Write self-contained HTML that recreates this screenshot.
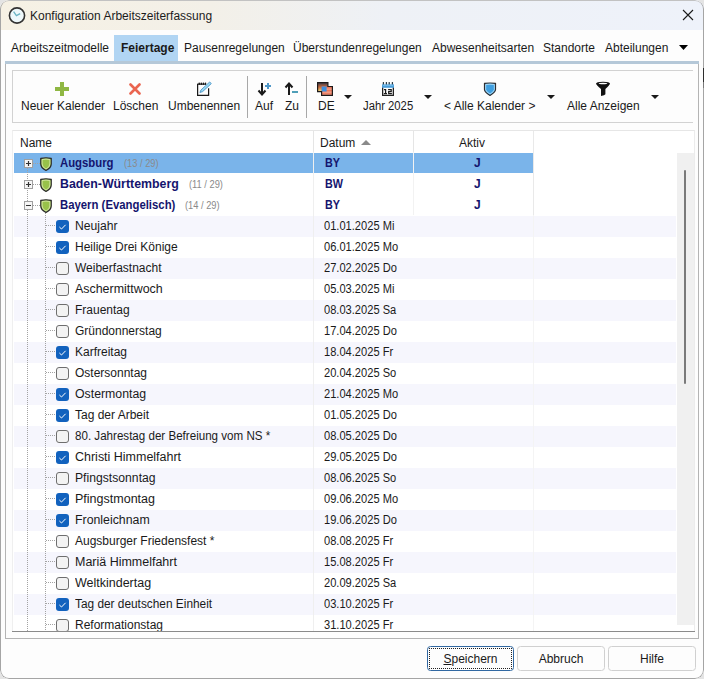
<!DOCTYPE html><html><head><meta charset="utf-8"><style>
*{margin:0;padding:0;box-sizing:border-box}
html,body{width:704px;height:679px;overflow:hidden;background:#e4e4e4;font-family:"Liberation Sans",sans-serif;font-size:12px;color:#1a1a1a}
.a{position:absolute;white-space:nowrap}
#win{position:absolute;left:0;top:0;width:704px;height:679px;border-radius:9px;background:#fdfdfd;overflow:hidden}
#frame{position:absolute;left:0;top:0;width:704px;height:679px;border:1px solid #a5a5a5;border-top-color:#c2c2c2;border-radius:9px;pointer-events:none}
#title{position:absolute;left:0;top:0;width:704px;height:30px;background:linear-gradient(90deg,#f6f1e4 0%,#f3f0e8 30%,#eef1f6 55%,#eef2fa 100%)}
.t{position:absolute;white-space:nowrap;line-height:14px}
.bold{font-weight:bold}
.navy{color:#14146e}
.cnt{color:#8a8a8a;font-size:10px}
.cb{position:absolute;width:13px;height:13px;border-radius:3px}
.cb.on{background:#0f5fbd}
.cb.off{background:#f3f3f3;border:1px solid #6e6e6e}
.dd{position:absolute;width:0;height:0;border-left:4px solid transparent;border-right:4px solid transparent;border-top:4px solid #1a1a1a}
.btn{position:absolute;top:646px;height:25px;border:1px solid #d0d0d0;border-radius:3.5px;background:#fdfdfd;text-align:center;line-height:23px}
</style></head><body><div id="win">
<div id="title"></div>
<svg class="a" style="left:8px;top:6px" width="18" height="18" viewBox="0 0 18 18"><circle cx="9" cy="9.5" r="7.6" fill="#eef8fb" stroke="#333" stroke-width="1.6"/><path d="M5.6 5.6 L8.4 9.6 L12.2 7.6" fill="none" stroke="#6ab4c4" stroke-width="1.3"/></svg>
<div class="t" style="left:30px;top:9px;font-size:12px;color:#1c1c1c">Konfiguration Arbeitszeiterfassung</div>
<svg class="a" style="left:682px;top:9px" width="12" height="12" viewBox="0 0 12 12"><path d="M1 1L11 11M11 1L1 11" stroke="#1a1a1a" stroke-width="1.1"/></svg>
<div class="a" style="left:114px;top:35px;width:64px;height:26px;background:#b1d5f3"></div>
<div class="a" style="left:5px;top:61px;width:694px;height:3px;background:#b5c8d8"></div>
<div class="t" style="left:11px;top:41px">Arbeitszeitmodelle</div>
<div class="t bold" style="left:121px;top:41px">Feiertage</div>
<div class="t" style="left:184px;top:41px">Pausenregelungen</div>
<div class="t" style="left:293px;top:41px">Überstundenregelungen</div>
<div class="t" style="left:432px;top:41px">Abwesenheitsarten</div>
<div class="t" style="left:543px;top:41px">Standorte</div>
<div class="t" style="left:605px;top:41px">Abteilungen</div>
<svg class="a" style="left:679px;top:45px" width="9" height="5"><path d="M0 0H9L4.5 5Z" fill="#000"/></svg>
<div class="a" style="left:5px;top:64px;width:694px;height:575px;border:1px solid #b4b4b4;border-top:none"></div>
<div class="a" style="left:12px;top:70px;width:681px;height:53px;border:1px solid #d2d2d2;border-right:none"></div>
<div class="a" style="left:247px;top:76px;width:1px;height:42px;background:#a8a8a8"></div>
<div class="a" style="left:306px;top:76px;width:1px;height:42px;background:#a8a8a8"></div>
<div class="t" style="left:21px;top:99px;transform:scaleX(1);transform-origin:0 0">Neuer Kalender</div>
<div class="t" style="left:113px;top:99px;transform:scaleX(1);transform-origin:0 0">Löschen</div>
<div class="t" style="left:168px;top:99px;transform:scaleX(1);transform-origin:0 0">Umbenennen</div>
<div class="t" style="left:255px;top:99px;transform:scaleX(1);transform-origin:0 0">Auf</div>
<div class="t" style="left:285px;top:99px;transform:scaleX(1);transform-origin:0 0">Zu</div>
<div class="t" style="left:318px;top:99px;transform:scaleX(1);transform-origin:0 0">DE</div>
<div class="t" style="left:363px;top:99px;transform:scaleX(0.94);transform-origin:0 0">Jahr 2025</div>
<div class="t" style="left:444px;top:99px;transform:scaleX(1);transform-origin:0 0">&lt; Alle Kalender &gt;</div>
<div class="t" style="left:567px;top:99px;transform:scaleX(1);transform-origin:0 0">Alle Anzeigen</div>
<svg class="a" style="left:55px;top:82px" width="14" height="14"><rect x="5" y="0" width="4" height="14" fill="#8fb743"/><rect x="0" y="5" width="14" height="4" fill="#8fb743"/></svg>
<svg class="a" style="left:129px;top:83px" width="12" height="12"><path d="M1.5 1.5L10.5 10.5M10.5 1.5L1.5 10.5" stroke="#ea6550" stroke-width="2.6" stroke-linecap="round"/></svg>
<svg class="a" style="left:196px;top:81px" width="17" height="16"><path d="M1.6 2.8V14.3H12.6V7.2" fill="none" stroke="#1a1a1a" stroke-width="1.25"/><path d="M1.6 3.2H9.6" stroke="#1a1a1a" stroke-width="1"/><g fill="#1a1a1a"><ellipse cx="3.2" cy="2.8" rx="0.8" ry="1.3"/><ellipse cx="5.3" cy="2.8" rx="0.8" ry="1.3"/><ellipse cx="7.4" cy="2.8" rx="0.8" ry="1.3"/><ellipse cx="9.5" cy="2.8" rx="0.8" ry="1.3"/></g><path d="M3.9 11.5L4.97 8.96L13.72 0.95L15.28 2.65L6.53 10.66Z" fill="#9adaf4" stroke="#3f8cc2" stroke-width="0.8"/></svg>
<svg class="a" style="left:257px;top:82px" width="16" height="14"><path d="M5 1V12.5M1.5 8.5L5 12.5L8.5 8.5" fill="none" stroke="#1a1a1a" stroke-width="2"/><path d="M11 1V7M8 4H14" stroke="#4f97c8" stroke-width="2"/></svg>
<svg class="a" style="left:284px;top:82px" width="16" height="14"><path d="M5 13V1.5M1.5 5.5L5 1.5L8.5 5.5" fill="none" stroke="#1a1a1a" stroke-width="2"/><path d="M8 10H14" stroke="#4f9fb8" stroke-width="2"/></svg>
<svg class="a" style="left:316px;top:81px" width="18" height="16"><defs><linearGradient id="gf" x1="0" y1="0" x2="0" y2="1"><stop offset="0" stop-color="#3a3a4a"/><stop offset="0.5" stop-color="#c86a3c"/><stop offset="1" stop-color="#f2e27a"/></linearGradient></defs><rect x="1.6" y="1.6" width="10.3" height="9" fill="url(#gf)"/><rect x="5.6" y="5.5" width="10.8" height="8.9" fill="#e9775c"/><rect x="10" y="7.6" width="6.4" height="1" fill="#f4b09c"/><rect x="5.6" y="10.6" width="10.8" height="1" fill="#f4b09c"/><rect x="5.6" y="12.8" width="10.8" height="0.8" fill="#f2a08a"/><rect x="5.6" y="5.5" width="5" height="5" fill="#3a8fe0"/><path d="M1.6 1.6H11.9V5.5H16.4V14.4H5.6V10.6H1.6Z" fill="none" stroke="#1e1a1a" stroke-width="1.2"/></svg>
<svg class="a" style="left:382px;top:82px" width="13" height="14"><path d="M1.4 0.6V2.8M4.4 0.6V2.8M7.2 0.6V2.8M10.4 0.6V2.8" stroke="#2a3a44" stroke-width="1.3" stroke-linecap="round"/><rect x="0" y="2.4" width="12" height="3.6" fill="#4a9edb"/><rect x="0.7" y="2.8" width="10.6" height="0.8" fill="#8ccaf0"/><path d="M0.65 5.8V13.35H11.35V5.8" fill="#fff" stroke="#222" stroke-width="1.3"/><path d="M2 7.6H3.6V11.6M1.9 11.7H5" fill="none" stroke="#1a1a1a" stroke-width="1.25"/><path d="M6.1 7.6H9.2V9.6H6.7V11.7H9.9" fill="none" stroke="#1a1a1a" stroke-width="1.25"/></svg>
<svg class="a" style="left:483px;top:82px" width="14" height="14" viewBox="0 0 14 14"><path d="M1.5 1.4Q7 0.6 12.5 1.4V7.8Q12.2 10.4 7 13.4Q1.8 10.4 1.5 7.8Z" fill="#3f9fe0" stroke="#2e2e30" stroke-width="1.2"/><path d="M2.7 2.5Q7 1.9 11.3 2.5V7.7Q11 9.8 7 12Q3 9.8 2.7 7.7Z" fill="none" stroke="#c4e8fa" stroke-width="0.8"/></svg>
<svg class="a" style="left:595px;top:81px" width="16" height="16"><path d="M1 2.8Q1 0.7 8 0.7Q15 0.7 15 2.8Q14.6 4.2 10.4 8V13.2Q9.8 14.4 6 15V8Q1.4 4.2 1 2.8Z" fill="#111"/><ellipse cx="8" cy="2.5" rx="4.3" ry="0.75" fill="#fff"/></svg>
<div class="dd" style="left:344px;top:95px"></div>
<div class="dd" style="left:424px;top:95px"></div>
<div class="dd" style="left:547px;top:95px"></div>
<div class="dd" style="left:651px;top:95px"></div>
<div class="a" style="left:12px;top:130px;width:683px;height:502px;border:1px solid #e6e6e6;border-left-color:#efefef;border-right-color:#ececec;border-bottom:1px solid #8a8a8a;background:#fff"></div>
<div class="a" style="left:313px;top:131px;width:1px;height:21px;background:#e5e5e5"></div>
<div class="a" style="left:413px;top:131px;width:1px;height:21px;background:#e5e5e5"></div>
<div class="a" style="left:533px;top:131px;width:1px;height:84px;background:#e9e9e9"></div>
<div class="t" style="left:20px;top:136px">Name</div>
<div class="t" style="left:320px;top:136px">Datum</div>
<div class="t" style="left:459px;top:136px">Aktiv</div>
<div class="dd" style="left:361px;top:140px;border-top:none;border-bottom:5px solid #8a8a8a;border-left-width:5px;border-right-width:5px"></div>
<div class="a" style="left:677px;top:153px;width:17px;height:472px;background:#f0f0f0"></div>
<div class="a" style="left:684px;top:170px;width:2px;height:214px;background:#7a7a7a;border-radius:1px"></div>
<div class="a" style="left:14px;top:216px;width:662px;height:21px;background:#f6f6fd"></div>
<div class="a" style="left:14px;top:258px;width:662px;height:21px;background:#f6f6fd"></div>
<div class="a" style="left:14px;top:300px;width:662px;height:21px;background:#f6f6fd"></div>
<div class="a" style="left:14px;top:342px;width:662px;height:21px;background:#f6f6fd"></div>
<div class="a" style="left:14px;top:384px;width:662px;height:21px;background:#f6f6fd"></div>
<div class="a" style="left:14px;top:426px;width:662px;height:21px;background:#f6f6fd"></div>
<div class="a" style="left:14px;top:468px;width:662px;height:21px;background:#f6f6fd"></div>
<div class="a" style="left:14px;top:510px;width:662px;height:21px;background:#f6f6fd"></div>
<div class="a" style="left:14px;top:552px;width:662px;height:21px;background:#f6f6fd"></div>
<div class="a" style="left:14px;top:594px;width:662px;height:21px;background:#f6f6fd"></div>
<div class="a" style="left:14px;top:153px;width:519px;height:20px;background:#7ab4ea"></div>
<div class="a" style="left:313px;top:152px;width:1px;height:479px;background:#efefef"></div>
<div class="a" style="left:533px;top:215px;width:1px;height:416px;background:#f4f4f4"></div>
<div class="a" style="left:413px;top:152px;width:1px;height:63px;background:#f2f2f2"></div>
<div class="a" style="left:27px;top:168px;width:1px;height:463px;background:repeating-linear-gradient(180deg,#a3a3a3 0 1px,transparent 1px 2px)"></div>
<div class="a" style="left:33px;top:163px;width:7px;height:1px;background:repeating-linear-gradient(90deg,#a3a3a3 0 1px,transparent 1px 2px)"></div>
<div class="a" style="left:33px;top:184px;width:7px;height:1px;background:repeating-linear-gradient(90deg,#a3a3a3 0 1px,transparent 1px 2px)"></div>
<div class="a" style="left:33px;top:205px;width:7px;height:1px;background:repeating-linear-gradient(90deg,#a3a3a3 0 1px,transparent 1px 2px)"></div>
<div class="a" style="left:45px;top:213px;width:1px;height:418px;background:repeating-linear-gradient(180deg,#a3a3a3 0 1px,transparent 1px 2px)"></div>
<svg class="a" style="left:24px;top:159px" width="9" height="9"><rect x="0.5" y="0.5" width="8" height="8" fill="#f6f6f6" stroke="#a0a0a0"/><path d="M2 4.5H7" stroke="#333" stroke-width="1.2"/><path d="M4.5 2V7" stroke="#333" stroke-width="1.2"/></svg>
<svg class="a" style="left:40px;top:157px" width="12" height="14" viewBox="0 0 12 14"><path d="M0.8 1.4Q6 0.2 11.2 1.4V7Q11.2 11 6 13.4Q0.8 11 0.8 7Z" fill="#98c24a" stroke="#2b2b2b" stroke-width="1.3"/><path d="M2.1 2.5Q6 1.6 9.9 2.5V7Q9.9 10.2 6 12.1Q2.1 10.2 2.1 7Z" fill="none" stroke="#e2efb8" stroke-width="0.8"/></svg>
<div class="t bold navy" style="left:60px;top:156px;transform:scaleX(0.945);transform-origin:0 0">Augsburg</div>
<div class="t cnt" style="left:124px;top:157px;transform:scaleX(0.93);transform-origin:0 0">(13 / 29)</div>
<div class="t bold navy" style="left:325px;top:156px;transform:scaleX(0.9);transform-origin:0 0">BY</div>
<div class="t bold navy" style="left:474px;top:156px">J</div>
<svg class="a" style="left:24px;top:180px" width="9" height="9"><rect x="0.5" y="0.5" width="8" height="8" fill="#f6f6f6" stroke="#a0a0a0"/><path d="M2 4.5H7" stroke="#333" stroke-width="1.2"/><path d="M4.5 2V7" stroke="#333" stroke-width="1.2"/></svg>
<svg class="a" style="left:40px;top:178px" width="12" height="14" viewBox="0 0 12 14"><path d="M0.8 1.4Q6 0.2 11.2 1.4V7Q11.2 11 6 13.4Q0.8 11 0.8 7Z" fill="#98c24a" stroke="#2b2b2b" stroke-width="1.3"/><path d="M2.1 2.5Q6 1.6 9.9 2.5V7Q9.9 10.2 6 12.1Q2.1 10.2 2.1 7Z" fill="none" stroke="#e2efb8" stroke-width="0.8"/></svg>
<div class="t bold navy" style="left:60px;top:177px;transform:scaleX(1.03);transform-origin:0 0">Baden-Württemberg</div>
<div class="t cnt" style="left:189px;top:178px;transform:scaleX(0.93);transform-origin:0 0">(11 / 29)</div>
<div class="t bold navy" style="left:325px;top:177px;transform:scaleX(0.9);transform-origin:0 0">BW</div>
<div class="t bold navy" style="left:474px;top:177px">J</div>
<svg class="a" style="left:24px;top:201px" width="9" height="9"><rect x="0.5" y="0.5" width="8" height="8" fill="#f6f6f6" stroke="#a0a0a0"/><path d="M2 4.5H7" stroke="#333" stroke-width="1.2"/></svg>
<svg class="a" style="left:40px;top:199px" width="12" height="14" viewBox="0 0 12 14"><path d="M0.8 1.4Q6 0.2 11.2 1.4V7Q11.2 11 6 13.4Q0.8 11 0.8 7Z" fill="#98c24a" stroke="#2b2b2b" stroke-width="1.3"/><path d="M2.1 2.5Q6 1.6 9.9 2.5V7Q9.9 10.2 6 12.1Q2.1 10.2 2.1 7Z" fill="none" stroke="#e2efb8" stroke-width="0.8"/></svg>
<div class="t bold navy" style="left:60px;top:198px;transform:scaleX(0.945);transform-origin:0 0">Bayern (Evangelisch)</div>
<div class="t cnt" style="left:185px;top:199px;transform:scaleX(0.93);transform-origin:0 0">(14 / 29)</div>
<div class="t bold navy" style="left:325px;top:198px;transform:scaleX(0.9);transform-origin:0 0">BY</div>
<div class="t bold navy" style="left:474px;top:198px">J</div>
<div class="a" style="left:46px;top:225px;width:10px;height:1px;background:repeating-linear-gradient(90deg,#a3a3a3 0 1px,transparent 1px 2px)"></div>
<svg class="a" style="left:56px;top:220px" width="13" height="13"><rect width="13" height="13" rx="3" fill="#1262be"/><path d="M3.4 7L5.5 9L9.6 4.8" fill="none" stroke="#fff" stroke-width="1"/></svg>
<div class="t" style="left:75px;top:219px;transform:scaleX(1.012);transform-origin:0 0">Neujahr</div>
<div class="t" style="left:324px;top:219px;transform:scaleX(0.925);transform-origin:0 0">01.01.2025 Mi</div>
<div class="a" style="left:46px;top:246px;width:10px;height:1px;background:repeating-linear-gradient(90deg,#a3a3a3 0 1px,transparent 1px 2px)"></div>
<svg class="a" style="left:56px;top:241px" width="13" height="13"><rect width="13" height="13" rx="3" fill="#1262be"/><path d="M3.4 7L5.5 9L9.6 4.8" fill="none" stroke="#fff" stroke-width="1"/></svg>
<div class="t" style="left:75px;top:240px;transform:scaleX(1);transform-origin:0 0">Heilige Drei Könige</div>
<div class="t" style="left:324px;top:240px;transform:scaleX(0.925);transform-origin:0 0">06.01.2025 Mo</div>
<div class="a" style="left:46px;top:267px;width:10px;height:1px;background:repeating-linear-gradient(90deg,#a3a3a3 0 1px,transparent 1px 2px)"></div>
<div class="cb off" style="left:56px;top:262px"></div>
<div class="t" style="left:75px;top:261px;transform:scaleX(1);transform-origin:0 0">Weiberfastnacht</div>
<div class="t" style="left:324px;top:261px;transform:scaleX(0.925);transform-origin:0 0">27.02.2025 Do</div>
<div class="a" style="left:46px;top:288px;width:10px;height:1px;background:repeating-linear-gradient(90deg,#a3a3a3 0 1px,transparent 1px 2px)"></div>
<div class="cb off" style="left:56px;top:283px"></div>
<div class="t" style="left:75px;top:282px;transform:scaleX(1.035);transform-origin:0 0">Aschermittwoch</div>
<div class="t" style="left:324px;top:282px;transform:scaleX(0.925);transform-origin:0 0">05.03.2025 Mi</div>
<div class="a" style="left:46px;top:309px;width:10px;height:1px;background:repeating-linear-gradient(90deg,#a3a3a3 0 1px,transparent 1px 2px)"></div>
<div class="cb off" style="left:56px;top:304px"></div>
<div class="t" style="left:75px;top:303px;transform:scaleX(1);transform-origin:0 0">Frauentag</div>
<div class="t" style="left:324px;top:303px;transform:scaleX(0.925);transform-origin:0 0">08.03.2025 Sa</div>
<div class="a" style="left:46px;top:330px;width:10px;height:1px;background:repeating-linear-gradient(90deg,#a3a3a3 0 1px,transparent 1px 2px)"></div>
<div class="cb off" style="left:56px;top:325px"></div>
<div class="t" style="left:75px;top:324px;transform:scaleX(1);transform-origin:0 0">Gründonnerstag</div>
<div class="t" style="left:324px;top:324px;transform:scaleX(0.925);transform-origin:0 0">17.04.2025 Do</div>
<div class="a" style="left:46px;top:351px;width:10px;height:1px;background:repeating-linear-gradient(90deg,#a3a3a3 0 1px,transparent 1px 2px)"></div>
<svg class="a" style="left:56px;top:346px" width="13" height="13"><rect width="13" height="13" rx="3" fill="#1262be"/><path d="M3.4 7L5.5 9L9.6 4.8" fill="none" stroke="#fff" stroke-width="1"/></svg>
<div class="t" style="left:75px;top:345px;transform:scaleX(1);transform-origin:0 0">Karfreitag</div>
<div class="t" style="left:324px;top:345px;transform:scaleX(0.925);transform-origin:0 0">18.04.2025 Fr</div>
<div class="a" style="left:46px;top:372px;width:10px;height:1px;background:repeating-linear-gradient(90deg,#a3a3a3 0 1px,transparent 1px 2px)"></div>
<div class="cb off" style="left:56px;top:367px"></div>
<div class="t" style="left:75px;top:366px;transform:scaleX(1);transform-origin:0 0">Ostersonntag</div>
<div class="t" style="left:324px;top:366px;transform:scaleX(0.925);transform-origin:0 0">20.04.2025 So</div>
<div class="a" style="left:46px;top:393px;width:10px;height:1px;background:repeating-linear-gradient(90deg,#a3a3a3 0 1px,transparent 1px 2px)"></div>
<svg class="a" style="left:56px;top:388px" width="13" height="13"><rect width="13" height="13" rx="3" fill="#1262be"/><path d="M3.4 7L5.5 9L9.6 4.8" fill="none" stroke="#fff" stroke-width="1"/></svg>
<div class="t" style="left:75px;top:387px;transform:scaleX(1.025);transform-origin:0 0">Ostermontag</div>
<div class="t" style="left:324px;top:387px;transform:scaleX(0.925);transform-origin:0 0">21.04.2025 Mo</div>
<div class="a" style="left:46px;top:414px;width:10px;height:1px;background:repeating-linear-gradient(90deg,#a3a3a3 0 1px,transparent 1px 2px)"></div>
<svg class="a" style="left:56px;top:409px" width="13" height="13"><rect width="13" height="13" rx="3" fill="#1262be"/><path d="M3.4 7L5.5 9L9.6 4.8" fill="none" stroke="#fff" stroke-width="1"/></svg>
<div class="t" style="left:75px;top:408px;transform:scaleX(1);transform-origin:0 0">Tag der Arbeit</div>
<div class="t" style="left:324px;top:408px;transform:scaleX(0.925);transform-origin:0 0">01.05.2025 Do</div>
<div class="a" style="left:46px;top:435px;width:10px;height:1px;background:repeating-linear-gradient(90deg,#a3a3a3 0 1px,transparent 1px 2px)"></div>
<div class="cb off" style="left:56px;top:430px"></div>
<div class="t" style="left:75px;top:429px;transform:scaleX(0.966);transform-origin:0 0">80. Jahrestag der Befreiung vom NS *</div>
<div class="t" style="left:324px;top:429px;transform:scaleX(0.925);transform-origin:0 0">08.05.2025 Do</div>
<div class="a" style="left:46px;top:456px;width:10px;height:1px;background:repeating-linear-gradient(90deg,#a3a3a3 0 1px,transparent 1px 2px)"></div>
<svg class="a" style="left:56px;top:451px" width="13" height="13"><rect width="13" height="13" rx="3" fill="#1262be"/><path d="M3.4 7L5.5 9L9.6 4.8" fill="none" stroke="#fff" stroke-width="1"/></svg>
<div class="t" style="left:75px;top:450px;transform:scaleX(1.04);transform-origin:0 0">Christi Himmelfahrt</div>
<div class="t" style="left:324px;top:450px;transform:scaleX(0.925);transform-origin:0 0">29.05.2025 Do</div>
<div class="a" style="left:46px;top:477px;width:10px;height:1px;background:repeating-linear-gradient(90deg,#a3a3a3 0 1px,transparent 1px 2px)"></div>
<div class="cb off" style="left:56px;top:472px"></div>
<div class="t" style="left:75px;top:471px;transform:scaleX(1.015);transform-origin:0 0">Pfingstsonntag</div>
<div class="t" style="left:324px;top:471px;transform:scaleX(0.925);transform-origin:0 0">08.06.2025 So</div>
<div class="a" style="left:46px;top:498px;width:10px;height:1px;background:repeating-linear-gradient(90deg,#a3a3a3 0 1px,transparent 1px 2px)"></div>
<svg class="a" style="left:56px;top:493px" width="13" height="13"><rect width="13" height="13" rx="3" fill="#1262be"/><path d="M3.4 7L5.5 9L9.6 4.8" fill="none" stroke="#fff" stroke-width="1"/></svg>
<div class="t" style="left:75px;top:492px;transform:scaleX(1.043);transform-origin:0 0">Pfingstmontag</div>
<div class="t" style="left:324px;top:492px;transform:scaleX(0.925);transform-origin:0 0">09.06.2025 Mo</div>
<div class="a" style="left:46px;top:519px;width:10px;height:1px;background:repeating-linear-gradient(90deg,#a3a3a3 0 1px,transparent 1px 2px)"></div>
<svg class="a" style="left:56px;top:514px" width="13" height="13"><rect width="13" height="13" rx="3" fill="#1262be"/><path d="M3.4 7L5.5 9L9.6 4.8" fill="none" stroke="#fff" stroke-width="1"/></svg>
<div class="t" style="left:75px;top:513px;transform:scaleX(1.027);transform-origin:0 0">Fronleichnam</div>
<div class="t" style="left:324px;top:513px;transform:scaleX(0.925);transform-origin:0 0">19.06.2025 Do</div>
<div class="a" style="left:46px;top:540px;width:10px;height:1px;background:repeating-linear-gradient(90deg,#a3a3a3 0 1px,transparent 1px 2px)"></div>
<div class="cb off" style="left:56px;top:535px"></div>
<div class="t" style="left:75px;top:534px;transform:scaleX(1);transform-origin:0 0">Augsburger Friedensfest *</div>
<div class="t" style="left:324px;top:534px;transform:scaleX(0.925);transform-origin:0 0">08.08.2025 Fr</div>
<div class="a" style="left:46px;top:561px;width:10px;height:1px;background:repeating-linear-gradient(90deg,#a3a3a3 0 1px,transparent 1px 2px)"></div>
<div class="cb off" style="left:56px;top:556px"></div>
<div class="t" style="left:75px;top:555px;transform:scaleX(1.04);transform-origin:0 0">Mariä Himmelfahrt</div>
<div class="t" style="left:324px;top:555px;transform:scaleX(0.925);transform-origin:0 0">15.08.2025 Fr</div>
<div class="a" style="left:46px;top:582px;width:10px;height:1px;background:repeating-linear-gradient(90deg,#a3a3a3 0 1px,transparent 1px 2px)"></div>
<div class="cb off" style="left:56px;top:577px"></div>
<div class="t" style="left:75px;top:576px;transform:scaleX(1.04);transform-origin:0 0">Weltkindertag</div>
<div class="t" style="left:324px;top:576px;transform:scaleX(0.925);transform-origin:0 0">20.09.2025 Sa</div>
<div class="a" style="left:46px;top:603px;width:10px;height:1px;background:repeating-linear-gradient(90deg,#a3a3a3 0 1px,transparent 1px 2px)"></div>
<svg class="a" style="left:56px;top:598px" width="13" height="13"><rect width="13" height="13" rx="3" fill="#1262be"/><path d="M3.4 7L5.5 9L9.6 4.8" fill="none" stroke="#fff" stroke-width="1"/></svg>
<div class="t" style="left:75px;top:597px;transform:scaleX(0.988);transform-origin:0 0">Tag der deutschen Einheit</div>
<div class="t" style="left:324px;top:597px;transform:scaleX(0.925);transform-origin:0 0">03.10.2025 Fr</div>
<div class="a" style="left:46px;top:624px;width:10px;height:1px;background:repeating-linear-gradient(90deg,#a3a3a3 0 1px,transparent 1px 2px)"></div>
<div class="cb off" style="left:56px;top:619px"></div>
<div class="t" style="left:75px;top:618px;transform:scaleX(1);transform-origin:0 0">Reformationstag</div>
<div class="t" style="left:324px;top:618px;transform:scaleX(0.925);transform-origin:0 0">31.10.2025 Fr</div>
<div class="a" style="left:12px;top:631px;width:683px;height:1px;background:#8a8a8a"></div>
<div class="btn" style="left:427px;width:87px;border-color:#3168a2;line-height:25px"><span style="text-decoration:underline">S</span>peichern</div>
<div class="a" style="left:429px;top:648px;width:83px;height:21px;border:1px dotted #222"></div>
<div class="btn" style="left:517px;width:88px;line-height:25px">Abbruch</div>
<div class="btn" style="left:608px;width:88px;line-height:25px">Hilfe</div>
<div id="frame"></div>
<div class="a" style="left:703px;top:68px;width:1px;height:14px;background:#2e2e2e"></div>
<div class="a" style="left:703px;top:82px;width:1px;height:6px;background:#7a7a7a"></div>
</div></body></html>
